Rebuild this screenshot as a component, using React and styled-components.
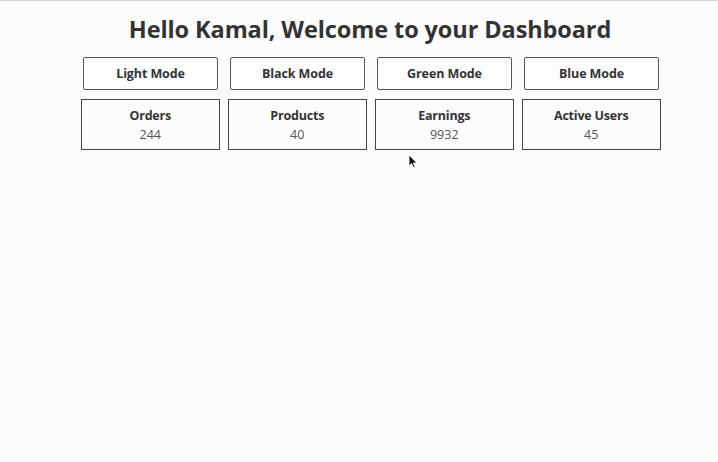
import React from "react";
import styled, { createGlobalStyle } from "styled-components";

const Global = createGlobalStyle`
  html, body { margin: 0; padding: 0; background: #fcfcfc; }
  body { font-family: "Open Sans", "Noto Sans", sans-serif; color: #333; }
`;

const Page = styled.div`
  width: 718px;
  height: 462px;
  box-sizing: border-box;
  border-top: 1px solid #d6d6d6;
  position: relative;
  overflow: hidden;
`;

const Wrapper = styled.div`
  width: 588px;
  margin-left: 76px;
  display: flex;
  flex-direction: column;
`;

const Title = styled.h1`
  margin: 0;
  padding-top: 13px;
  height: 31px;
  text-align: center;
  font-size: 23.5px;
  font-weight: 700;
  line-height: 31px;
  color: #333;
  letter-spacing: -0.1px;
`;

const ModeRow = styled.div`
  display: grid;
  grid-template-columns: repeat(4, 1fr);
  margin-top: 12px;
`;

const ModeButton = styled.button`
  margin: 0 5px 0 7px;
  height: 33px;
  box-sizing: border-box;
  border: 1px solid #555;
  border-radius: 2px;
  background: #fdfdfd;
  font-family: inherit;
  font-size: 12.5px;
  font-weight: 700;
  color: #333;
  letter-spacing: -0.1px;
  cursor: pointer;
  padding: 0;
`;

const CardRow = styled.div`
  display: grid;
  grid-template-columns: repeat(4, 1fr);
  margin-top: 9px;
`;

const Card = styled.div`
  margin: 0 3px 0 4.5px;
  height: 51px;
  box-sizing: border-box;
  border: 1px solid #444;
  display: flex;
  flex-direction: column;
  align-items: center;
  padding-top: 7px;
`;

const CardLabel = styled.div`
  font-size: 12.5px;
  font-weight: 700;
  line-height: 18px;
  letter-spacing: -0.2px;
  color: #333;
`;

const CardValue = styled.div`
  font-size: 12.5px;
  line-height: 20px;
  color: #555;
`;

const Cursor = styled.svg`
  position: absolute;
  left: 408px;
  top: 153px;
`;

const modes = ["Light Mode", "Black Mode", "Green Mode", "Blue Mode"];
const stats = [
  { label: "Orders", value: 244 },
  { label: "Products", value: 40 },
  { label: "Earnings", value: 9932 },
  { label: "Active Users", value: 45 },
];

export default function App() {
  return (
    <Page>
      <Global />
      <Wrapper>
        <Title>Hello Kamal, Welcome to your Dashboard</Title>
        <ModeRow>
          {modes.map((m) => (
            <ModeButton key={m}>{m}</ModeButton>
          ))}
        </ModeRow>
        <CardRow>
          {stats.map((s) => (
            <Card key={s.label}>
              <CardLabel>{s.label}</CardLabel>
              <CardValue>{s.value}</CardValue>
            </Card>
          ))}
        </CardRow>
      </Wrapper>
      <Cursor width="10" height="15" viewBox="0 0 10 15">
        <path d="M1 1 L1 12 L3.6 9.6 L5.4 13.6 L7 12.9 L5.3 9 L8.8 9 Z" fill="#111" stroke="#fff" strokeWidth="0.8" />
      </Cursor>
    </Page>
  );
}
